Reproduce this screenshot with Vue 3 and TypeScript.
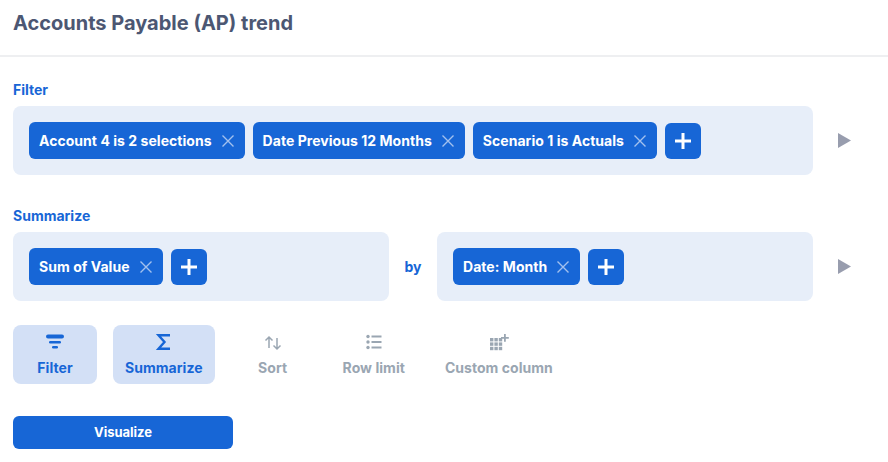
<script setup lang="ts">
interface Chip {
  label: string
}

interface Action {
  key: string
  label: string
  active: boolean
}

const filters: Chip[] = [
  { label: 'Account 4 is 2 selections' },
  { label: 'Date Previous 12 Months' },
  { label: 'Scenario 1 is Actuals' },
]

const actions: Action[] = [
  { key: 'filter', label: 'Filter', active: true },
  { key: 'summarize', label: 'Summarize', active: true },
  { key: 'sort', label: 'Sort', active: false },
  { key: 'limit', label: 'Row limit', active: false },
  { key: 'custom', label: 'Custom column', active: false },
]
</script>

<template>
  <div class="page">
    <header class="header">
      <h1 class="title">Accounts Payable (AP) trend</h1>
    </header>

    <div class="body">
      <section class="step">
        <div class="step-label">Filter</div>
        <div class="step-row">
          <div class="panel">
            <span v-for="chip in filters" :key="chip.label" class="chip">
              {{ chip.label }}
              <svg class="chip-x" width="14" height="14" viewBox="0 0 14 14"><path d="M1.5 1.5l11 11M12.5 1.5l-11 11" /></svg>
            </span>
            <button class="add">
              <svg width="16" height="16" viewBox="0 0 16 16"><path d="M8 0v16M0 8h16" /></svg>
            </button>
          </div>
          <svg class="run" width="13" height="15" viewBox="0 0 13 15"><path d="M0 0l13 7.5L0 15z" /></svg>
        </div>
      </section>

      <section class="step step-second">
        <div class="step-label">Summarize</div>
        <div class="step-row">
          <div class="panel panel-half">
            <span class="chip">
              Sum of Value
              <svg class="chip-x" width="14" height="14" viewBox="0 0 14 14"><path d="M1.5 1.5l11 11M12.5 1.5l-11 11" /></svg>
            </span>
            <button class="add">
              <svg width="16" height="16" viewBox="0 0 16 16"><path d="M8 0v16M0 8h16" /></svg>
            </button>
          </div>
          <span class="by">by</span>
          <div class="panel panel-half">
            <span class="chip">
              Date: Month
              <svg class="chip-x" width="14" height="14" viewBox="0 0 14 14"><path d="M1.5 1.5l11 11M12.5 1.5l-11 11" /></svg>
            </span>
            <button class="add">
              <svg width="16" height="16" viewBox="0 0 16 16"><path d="M8 0v16M0 8h16" /></svg>
            </button>
          </div>
          <svg class="run" width="13" height="15" viewBox="0 0 13 15"><path d="M0 0l13 7.5L0 15z" /></svg>
        </div>
      </section>

      <div class="actions">
        <button v-for="action in actions" :key="action.key" class="action" :class="{ active: action.active }">
          <svg v-if="action.key === 'filter'" width="20" height="18" viewBox="0 0 20 18" fill="currentColor">
            <rect x="1" y="1.5" width="18" height="4" rx="2" />
            <rect x="4" y="8" width="12" height="2.6" rx="1.3" />
            <rect x="7" y="13" width="6" height="2.6" rx="1.3" />
          </svg>
          <svg v-else-if="action.key === 'summarize'" width="20" height="18" viewBox="0 0 20 18" fill="none" stroke="currentColor" stroke-width="2.4">
            <path d="M16 2.2H4.5L10.5 9l-6 6.8H16" />
          </svg>
          <svg v-else-if="action.key === 'sort'" width="20" height="18" viewBox="0 0 20 18" fill="none" stroke="currentColor" stroke-width="1.5">
            <path d="M6 15V4M2.5 7.5L6 4l3.5 3.5M14 5v11M10.5 12.5L14 16l3.5-3.5" />
          </svg>
          <svg v-else-if="action.key === 'limit'" width="20" height="18" viewBox="0 0 20 18" fill="currentColor">
            <circle cx="4" cy="3.5" r="1.7" />
            <circle cx="4" cy="9" r="1.7" />
            <circle cx="4" cy="14.5" r="1.7" />
            <rect x="7.5" y="2.5" width="10" height="2" />
            <rect x="7.5" y="8" width="10" height="2" />
            <rect x="7.5" y="13.5" width="10" height="2" />
          </svg>
          <svg v-else width="20" height="18" viewBox="0 0 20 18" fill="currentColor">
            <rect x="1" y="5" width="3.4" height="3.4" />
            <rect x="5.4" y="5" width="3.4" height="3.4" />
            <rect x="9.8" y="5" width="3.4" height="3.4" />
            <rect x="1" y="9.4" width="3.4" height="3.4" />
            <rect x="5.4" y="9.4" width="3.4" height="3.4" />
            <rect x="9.8" y="9.4" width="3.4" height="3.4" />
            <rect x="1" y="13.8" width="3.4" height="3.4" />
            <rect x="5.4" y="13.8" width="3.4" height="3.4" />
            <rect x="9.8" y="13.8" width="3.4" height="3.4" />
            <path d="M15 1h1.8v3h3v1.8h-3v3H15v-3h-3V4h3z" />
          </svg>
          <span class="action-label">{{ action.label }}</span>
        </button>
      </div>

      <button class="visualize">Visualize</button>
    </div>
  </div>
</template>

<style scoped>
.page {
  width: 888px;
  height: 462px;
  overflow: hidden;
  background: #fff;
  font-family: Inter, "Liberation Sans", sans-serif;
}

.header {
  height: 55px;
  padding: 0 13px;
  display: flex;
  align-items: center;
  border-bottom: 2px solid #eeeff1;
  box-sizing: content-box;
}

.title {
  margin: 0 0 10px;
  font-size: 20px;
  font-weight: 700;
  color: #4c5773;
}

.body {
  padding: 24px 13px 0;
}

.step-second {
  margin-top: 32px;
}

.step-label {
  height: 18px;
  margin-bottom: 7px;
  font-size: 14px;
  line-height: 18px;
  font-weight: 700;
  color: #1766d6;
}

.step-row {
  display: flex;
  align-items: center;
}

.panel {
  width: 800px;
  height: 69px;
  padding: 0 16px;
  box-sizing: border-box;
  display: flex;
  align-items: center;
  gap: 8px;
  border-radius: 8px;
  background: #e7eef9;
}

.panel-half {
  width: 376px;
}

.chip {
  height: 37px;
  padding: 0 10px;
  box-sizing: border-box;
  display: flex;
  align-items: center;
  gap: 9px;
  border-radius: 6px;
  background: #1766d6;
  color: #fff;
  font-size: 14px;
  font-weight: 700;
  letter-spacing: 0.04px;
  white-space: nowrap;
}

.chip-x {
  fill: none;
  stroke: #a3c1ee;
  stroke-width: 1.4;
}

.add {
  width: 36px;
  height: 36px;
  margin-top: 1px;
  padding: 0;
  border: 0;
  display: flex;
  align-items: center;
  justify-content: center;
  border-radius: 6px;
  background: #1766d6;
}

.add svg {
  fill: none;
  stroke: #fff;
  stroke-width: 3;
}

.run {
  margin-left: 25px;
  fill: #989dae;
}

.by {
  width: 48px;
  text-align: center;
  font-size: 14px;
  font-weight: 700;
  color: #1766d6;
}

.actions {
  margin-top: 24px;
  display: flex;
  gap: 16px;
}

.action {
  min-width: 84px;
  height: 59px;
  padding: 8px 12px 0;
  border: 0;
  display: flex;
  flex-direction: column;
  align-items: center;
  justify-content: flex-start;
  border-radius: 8px;
  background: transparent;
  color: #9aa6b2;
  font-family: inherit;
}

.action.active {
  background: #d3e0f6;
  color: #1766d6;
}

.action-label {
  margin-top: 8px;
  font-size: 14px;
  line-height: 18px;
  font-weight: 700;
  letter-spacing: 0.04px;
  white-space: nowrap;
}

.visualize {
  display: block;
  width: 220px;
  height: 33px;
  margin-top: 32px;
  padding: 0 0 1px;
  border: 0;
  border-radius: 6px;
  background: #1766d6;
  color: #fff;
  font-family: inherit;
  font-size: 13px;
  font-weight: 700;
}
</style>
